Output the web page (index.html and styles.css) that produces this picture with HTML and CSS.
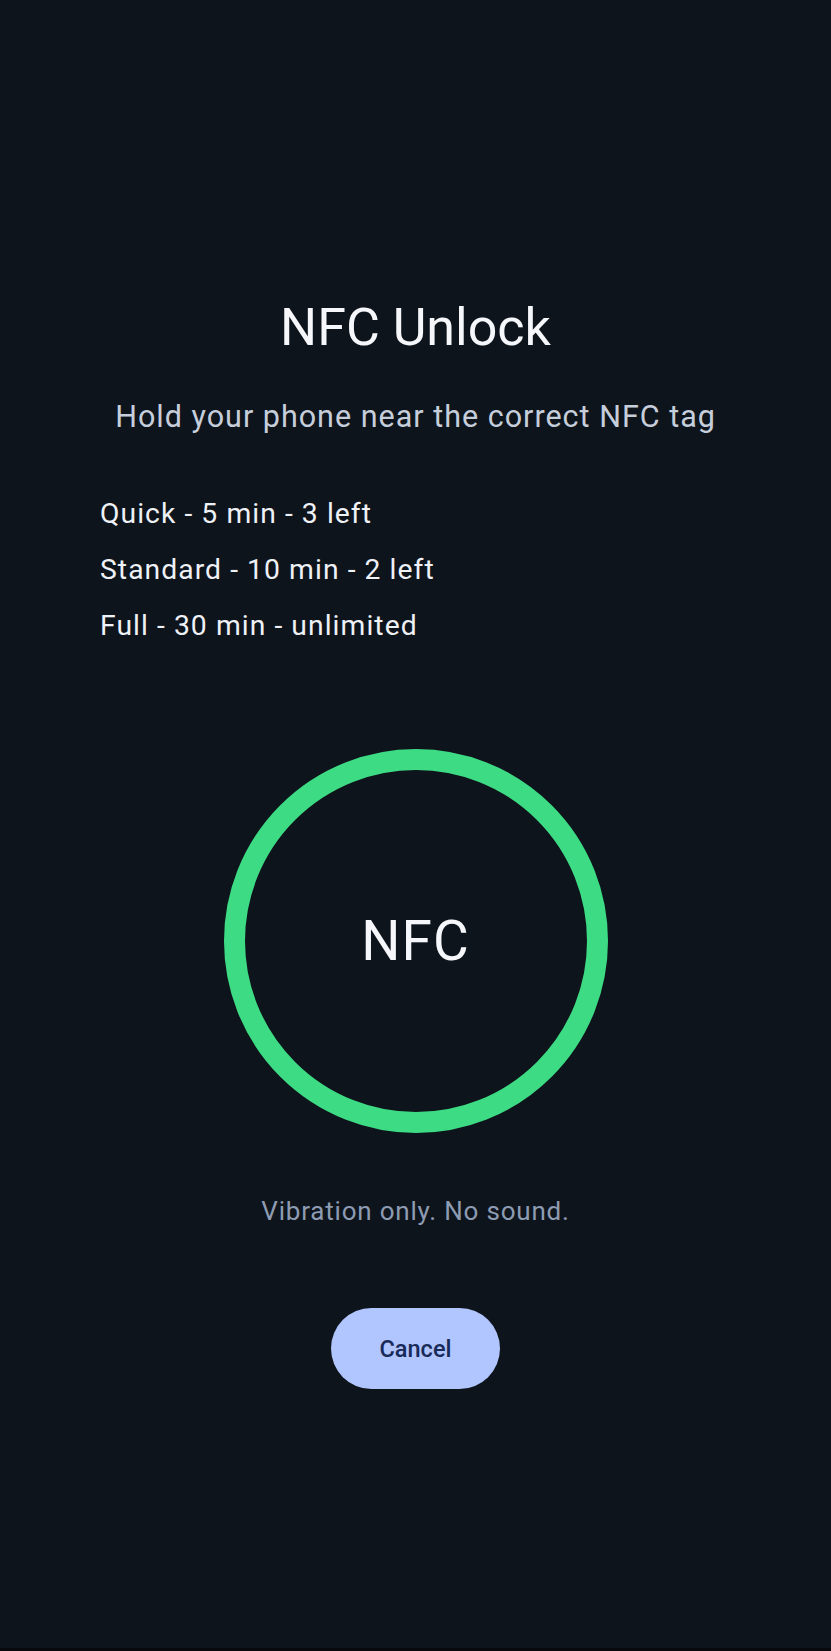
FILE: index.html
```html
<!DOCTYPE html>
<html lang="en">
<head>
    <meta charset="UTF-8">
    <meta name="viewport" content="width=device-width, initial-scale=1.0">
    <title>NFC Unlock</title>
    <link rel="stylesheet" href="styles.css">
</head>
<body>

<div class="screen">
    <div class="content">
        <h1>NFC Unlock</h1>
        <p class="subtitle">Hold your phone near the correct NFC tag</p>

        <!-- unlock options -->
        <ul class="options">
            <li>Quick - 5 min - 3 left</li>
            <li>Standard - 10 min - 2 left</li>
            <li>Full - 30 min - unlimited</li>
        </ul>

        <!-- scan ring -->
        <div class="ring">
            <span>NFC</span>
        </div>

        <p class="note">Vibration only. No sound.</p>

        <button class="cancel">Cancel</button>
    </div>
    <div class="navbar"></div>
</div>

</body>
</html>
```

FILE: styles.css
```css
html, body {
    margin: 0;
    padding: 0;
}
body {
    font-family: Roboto, "Liberation Sans", sans-serif;
    background-color: #0e141c;
    color: #f2f4f8;
}
.screen {
    min-height: 100vh;
    display: flex;
    flex-direction: column;
}
.content {
    flex: 1;
    display: flex;
    flex-direction: column;
    align-items: center;
    padding-top: 297px;
}
h1 {
    margin: 0;
    font-size: 52px;
    font-weight: 400;
    line-height: 62px;
    color: #f5f7fa;
}
.subtitle {
    margin: 40px 0 0;
    font-size: 30.5px;
    line-height: 36px;
    letter-spacing: 1px;
    color: #c6cedb;
}
.options {
    list-style: none;
    margin: 51px 0 0;
    padding: 0 100px;
    align-self: stretch;
}
.options li {
    font-size: 28.3px;
    line-height: 56px;
    letter-spacing: 1.05px;
    color: #eef1f6;
}
.ring {
    margin-top: 95px;
    width: 342px;
    height: 342px;
    border: 21px solid #3ddc84;
    border-radius: 50%;
    display: flex;
    align-items: center;
    justify-content: center;
}
.ring span {
    font-size: 55px;
    letter-spacing: 1px;
    color: #f5f7fa;
}
.note {
    margin: 63px 0 0;
    font-size: 26px;
    line-height: 30px;
    letter-spacing: 0.8px;
    color: #8d9cb2;
}
.cancel {
    margin-top: 82px;
    height: 81px;
    padding: 0 49px;
    border: none;
    border-radius: 41px;
    background-color: #b1c5ff;
    color: #172a58;
    font-family: Roboto, "Liberation Sans", sans-serif;
    font-size: 23.5px;
    font-weight: 500;
    cursor: pointer;
}
.navbar {
    height: 3px;
    background-color: #07090d;
}
```
